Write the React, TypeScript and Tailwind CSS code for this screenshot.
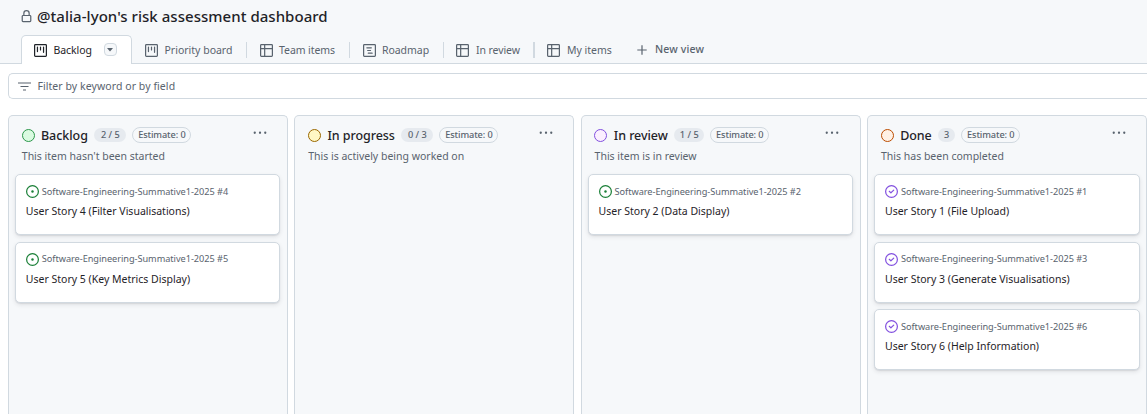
import React from "react";

type IconName = "project" | "table" | "roadmap";

function Project() {
  return (
    <svg viewBox="0 0 16 16" className="size-[13px] shrink-0" fill="none" stroke="currentColor" strokeWidth="1.5">
      <rect x=".75" y=".75" width="14.5" height="14.5" rx="1" />
      <path d="M4.25 3.75v5.5M8 3.75v3.5M11.75 3.75v6.5" strokeLinecap="round" />
    </svg>
  );
}

function Table() {
  return (
    <svg viewBox="0 0 16 16" className="size-[13px] shrink-0" fill="none" stroke="currentColor" strokeWidth="1.5">
      <rect x=".75" y=".75" width="14.5" height="14.5" rx="1" />
      <path d="M5.75 1v14M1 5.75h14" />
    </svg>
  );
}

function Roadmap() {
  return (
    <svg viewBox="0 0 16 16" className="size-[13px] shrink-0" fill="none" stroke="currentColor" strokeWidth="1.5">
      <rect x=".75" y=".75" width="14.5" height="14.5" rx="1" />
      <path d="M4.75 4.75h5.5M5.75 8h3.5M6.5 11.25h4.75" strokeLinecap="round" />
    </svg>
  );
}

const icons: Record<IconName, () => React.JSX.Element> = { project: Project, table: Table, roadmap: Roadmap };

function Lock() {
  return (
    <svg viewBox="0 0 16 16" className="mb-[2px] size-[13px] shrink-0 text-[#59636e]" fill="currentColor">
      <path d="M4 4a4 4 0 0 1 8 0v2h.25c.966 0 1.75.784 1.75 1.75v5.5A1.75 1.75 0 0 1 12.25 15h-8.5A1.75 1.75 0 0 1 2 13.25v-5.5C2 6.784 2.784 6 3.75 6H4Zm8.25 3.5h-8.5a.25.25 0 0 0-.25.25v5.5c0 .138.112.25.25.25h8.5a.25.25 0 0 0 .25-.25v-5.5a.25.25 0 0 0-.25-.25ZM10.5 6V4a2.5 2.5 0 1 0-5 0v2Z" />
    </svg>
  );
}

function IssueIcon({ closed }: { closed: boolean }) {
  return closed ? (
    <svg viewBox="0 0 16 16" className="size-[13px] shrink-0 text-[#8250df]" fill="currentColor">
      <path d="M11.28 6.78a.75.75 0 0 0-1.06-1.06L7.25 8.69 5.78 7.22a.75.75 0 0 0-1.06 1.06l2 2a.75.75 0 0 0 1.06 0l3.5-3.5Z" />
      <path d="M16 8A8 8 0 1 1 0 8a8 8 0 0 1 16 0Zm-1.5 0a6.5 6.5 0 1 0-13 0 6.5 6.5 0 0 0 13 0Z" />
    </svg>
  ) : (
    <svg viewBox="0 0 16 16" className="size-[13px] shrink-0 text-[#1a7f37]" fill="currentColor">
      <path d="M8 9.5a1.5 1.5 0 1 0 0-3 1.5 1.5 0 0 0 0 3Z" />
      <path d="M8 0a8 8 0 1 1 0 16A8 8 0 0 1 8 0ZM1.5 8a6.5 6.5 0 1 0 13 0 6.5 6.5 0 0 0-13 0Z" />
    </svg>
  );
}

const tabs: { label: string; icon: IconName; box: string; divider: string }[] = [
  { label: "Priority board", icon: "project", box: "w-[114px] pl-[13px] gap-[6.5px]", divider: "w-px bg-[#d1d9e0]" },
  { label: "Team items", icon: "table", box: "w-[102px] pl-[13px] gap-[6px] tracking-[-0.07px]", divider: "w-px bg-[#d1d9e0]" },
  { label: "Roadmap", icon: "roadmap", box: "w-[93px] pl-[13px] gap-[6px] tracking-[-0.05px]", divider: "w-px bg-[#d1d9e0]" },
  { label: "In review", icon: "table", box: "w-[89px] pl-[12px] gap-[7px] tracking-[-0.08px]", divider: "w-[1.6px] bg-[#d1d9e0]" },
  { label: "My items", icon: "table", box: "w-[102.4px] pl-[12.4px] gap-[7px]", divider: "w-0" },
];

type Item = { n: number; title: string };
type Column = { name: string; dot: string; count: string; countBox: string; note: string; closed: boolean; items: Item[] };

const columns: Column[] = [
  {
    name: "Backlog", dot: "bg-[#dafbe1] border-[#2c974b]", count: "2 / 5", countBox: "w-8", note: "This item hasn't been started", closed: false,
    items: [{ n: 4, title: "User Story 4 (Filter Visualisations)" }, { n: 5, title: "User Story 5 (Key Metrics Display)" }],
  },
  { name: "In progress", dot: "bg-[#fff8c5] border-[#9a6700]", count: "0 / 3", countBox: "w-8", note: "This is actively being worked on", closed: false, items: [] },
  {
    name: "In review", dot: "bg-[#fbefff] border-[#8250df]", count: "1 / 5", countBox: "w-[30px]", note: "This item is in review", closed: false,
    items: [{ n: 2, title: "User Story 2 (Data Display)" }],
  },
  {
    name: "Done", dot: "bg-[#fff1e5] border-[#bc4c00]", count: "3", countBox: "w-[17px]", note: "This has been completed", closed: true,
    items: [
      { n: 1, title: "User Story 1 (File Upload)" },
      { n: 3, title: "User Story 3 (Generate Visualisations)" },
      { n: 6, title: "User Story 6 (Help Information)" },
    ],
  },
];

function BoardColumn({ name, dot, count, countBox, note, closed, items }: Column) {
  return (
    <section className="w-[280px] shrink-0 rounded-t-[5px] border border-b-0 border-[#d1d9e0] bg-[#f6f8fa] pr-[6.6px] pl-[5.8px]">
      <div className="flex h-[38px] items-center pl-[6.8px]">
        <span className={`size-[13px] shrink-0 rounded-full border-[1.5px] ${dot}`} />
        <h2 className="ml-[6.4px] pt-0.5 text-[12.5px] font-medium tracking-[-0.05px] whitespace-nowrap">{name}</h2>
        <span className={`ml-[6.5px] flex h-[14px] items-center justify-center rounded-full bg-[#e6eaef] text-[9.2px] font-medium whitespace-nowrap text-[#59636e] ${countBox}`}>{count}</span>
        <span className="ml-[6px] flex h-4 w-[59px] items-center justify-center rounded-full border border-[#d1d9e0] text-[9.2px] font-medium tracking-[-0.1px] whitespace-nowrap text-[#59636e]">Estimate: 0</span>
        <svg viewBox="0 0 16 4" className="mr-[13.8px] mb-[4px] ml-auto h-[3.5px] w-[14px]" fill="#59636e">
          <circle cx="2" cy="2" r="1.3" /><circle cx="8" cy="2" r="1.3" /><circle cx="14" cy="2" r="1.3" />
        </svg>
      </div>
      <p className="h-[20.2px] pl-[7px] text-[10.5px] leading-[5px] whitespace-nowrap text-[#59636e]">{note}</p>
      <div className="flex flex-col gap-[6.4px]">
        {items.map((it) => (
          <article key={it.n} className="h-[61.1px] rounded-[5px] border border-[#d1d9e0] bg-white px-2.5 pt-[10.1px] shadow-[0_1px_1px_rgba(37,41,46,0.08),0_2px_4px_rgba(37,41,46,0.1)]">
            <div className="flex h-[13px] items-center gap-[3px] text-[9.2px] tracking-[-0.04px] whitespace-nowrap text-[#59636e]">
              <IssueIcon closed={closed} />
              <span>Software-Engineering-Summative1-2025 #{it.n}</span>
            </div>
            <div className="mt-[4.9px] text-[10.5px] leading-4 whitespace-nowrap">{it.title}</div>
          </article>
        ))}
      </div>
    </section>
  );
}

export default function App() {
  return (
    <div className="flex h-[414px] w-[1147px] flex-col overflow-hidden bg-white font-['Noto_Sans',sans-serif] text-[#1f2328]">
      <header className="h-16 shrink-0 bg-[#f6f8fa] shadow-[inset_0_-1px_0_#d1d9e0]">
        <div className="flex h-[35px] items-center gap-[4px] pb-px pl-5">
          <Lock />
          <h1 className="pb-0.5 text-[15px] leading-5 font-medium tracking-[0.04px] whitespace-nowrap">@talia-lyon's risk assessment dashboard</h1>
        </div>
        <nav className="flex h-[29px] items-center pl-[21px] text-[10.5px] text-[#59636e]">
          <div className="flex h-[29px] w-[111px] items-center rounded-t-[5px] border border-b-0 border-[#d1d9e0] bg-white pl-3 text-[#1f2328]">
            <Project />
            <span className="ml-[6.5px] w-[50px] pt-px tracking-[-0.08px] whitespace-nowrap">Backlog</span>
            <span className="mb-px flex h-[13.5px] w-[13.5px] items-center justify-center rounded-[4px] border border-[#d1d9e0] bg-[#f6f8fa]">
              <svg viewBox="0 0 6 4" className="h-[4px] w-[6px] shrink-0" fill="#59636e"><path d="M0 0h6L3 3.5Z" /></svg>
            </span>
          </div>
          {tabs.map((t) => {
            const Icon = icons[t.icon];
            return (
              <div key={t.label} className="flex items-center">
                <div className={`flex items-center whitespace-nowrap pt-px ${t.box}`}><Icon /><span className="pt-px">{t.label}</span></div>
                <span className={`h-4 ${t.divider}`} />
              </div>
            );
          })}
          <div className="flex items-center gap-2 font-medium whitespace-nowrap">
            <svg viewBox="0 0 10 10" className="size-[10px]" fill="none" stroke="currentColor" strokeWidth="1.2"><path d="M5 .3v9.4M.3 5h9.4" /></svg>
            <span className="tracking-[0.15px]">New view</span>
          </div>
        </nav>
      </header>
      <div className="pt-[9px] pl-2">
        <div className="flex h-[26px] items-center rounded-l-[5px] border border-r-0 border-[#d1d9e0] pl-[9px] text-[10.5px] text-[#59636e]">
          <svg viewBox="0 0 13 9" className="h-[9px] w-[13px]" fill="none" stroke="currentColor" strokeWidth="1.2"><path d="M0 1h13M2.5 4.5h8M5 8h3" /></svg>
          <span className="ml-[6.4px] pt-px tracking-[0.07px] whitespace-nowrap">Filter by keyword or by field</span>
        </div>
      </div>
      <main className="mt-4 flex min-h-0 flex-1 gap-[6.4px] pl-2">
        {columns.map((c) => <BoardColumn key={c.name} {...c} />)}
      </main>
    </div>
  );
}
